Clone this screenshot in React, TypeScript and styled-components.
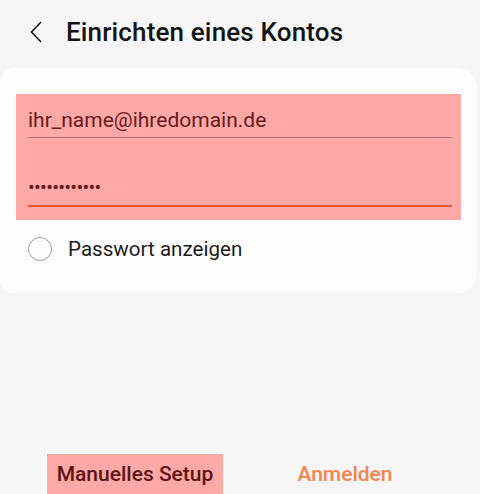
import React, { useState } from "react";
import styled, { createGlobalStyle } from "styled-components";

const GlobalStyle = createGlobalStyle`
  html, body {
    margin: 0;
    padding: 0;
    background: #f6f6f6;
  }
  * { box-sizing: border-box; }
`;

const Screen = styled.div`
  width: 480px;
  height: 494px;
  display: flex;
  flex-direction: column;
  background: #f6f6f6;
  font-family: Roboto, "Liberation Sans", sans-serif;
  overflow: hidden;
`;

const Header = styled.div`
  height: 68px;
  display: flex;
  align-items: center;
  padding: 0 0 5px 30px;
  gap: 24px;
`;

const BackButton = styled.button`
  border: 0;
  background: none;
  padding: 0;
  width: 12px;
  height: 22px;
  display: flex;
  cursor: pointer;
`;

const Title = styled.h1`
  margin: 0;
  font-size: 26px;
  font-weight: 500;
  color: #141414;
  letter-spacing: 0.15px;
`;

const Card = styled.div`
  height: 225px;
  margin-right: 3px;
  background: #fdfdfd;
  border-radius: 14px 20px 20px 14px;
  padding-top: 26px;
`;

const Highlight = styled.div`
  margin: 0 16px;
  padding: 0 9px 13px 12px;
  background: #ffa9a7;
`;

const Field = styled.div<{ $focused?: boolean; $top: number }>`
  padding-top: ${(p) => p.$top}px;
  padding-bottom: ${(p) => (p.$focused ? 6 : 5)}px;
  border-bottom: ${(p) => (p.$focused ? "2px solid #ea5230" : "1px solid #b07272")};
`;

const FieldText = styled.div<{ $secret?: boolean }>`
  font-size: ${(p) => (p.$secret ? 20 : 21)}px;
  line-height: 24px;
  color: #6a1818;
  letter-spacing: ${(p) => (p.$secret ? "-0.7px" : "0")};
`;

const CheckRow = styled.label`
  height: 58px;
  display: flex;
  align-items: center;
  gap: 16px;
  padding-left: 28px;
  cursor: pointer;
`;

const Radio = styled.span<{ $on: boolean }>`
  width: 24px;
  height: 24px;
  border-radius: 50%;
  border: 1.5px solid ${(p) => (p.$on ? "#f5834b" : "#9a9a9a")};
  background: ${(p) => (p.$on ? "#f5834b" : "transparent")};
`;

const CheckLabel = styled.span`
  font-size: 20.6px;
  color: #1c1c1c;
`;

const Spacer = styled.div`
  flex: 1;
`;

const Footer = styled.div`
  display: flex;
  padding: 0 30px;
  height: 40px;
`;

const FooterCell = styled.div`
  flex: 1;
  display: flex;
  justify-content: center;
`;

const FooterButton = styled.button<{ $primary?: boolean }>`
  border: 0;
  height: 40px;
  padding: 0 10px;
  font-family: Roboto, "Liberation Sans", sans-serif;
  font-size: 21px;
  font-weight: 500;
  line-height: 40px;
  background: ${(p) => (p.$primary ? "transparent" : "#ffa9a7")};
  color: ${(p) => (p.$primary ? "#f5834b" : "#5e1414")};
  cursor: pointer;
`;

export default function App() {
  const [showPw, setShowPw] = useState(false);
  return (
    <Screen>
      <GlobalStyle />
      <Header>
        <BackButton aria-label="Zurück">
          <svg width="12" height="22" viewBox="0 0 12 22">
            <path d="M11 1 L1.5 11 L11 21" fill="none" stroke="#1a1a1a" strokeWidth="1.6" />
          </svg>
        </BackButton>
        <Title>Einrichten eines Kontos</Title>
      </Header>
      <Card>
        <Highlight>
          <Field $top={14}>
            <FieldText>ihr_name@ihredomain.de</FieldText>
          </Field>
          <Field $top={37} $focused>
            <FieldText $secret>{showPw ? "passwort123" : "••••••••••••"}</FieldText>
          </Field>
        </Highlight>
        <CheckRow onClick={() => setShowPw(!showPw)}>
          <Radio $on={showPw} />
          <CheckLabel>Passwort anzeigen</CheckLabel>
        </CheckRow>
      </Card>
      <Spacer />
      <Footer>
        <FooterCell>
          <FooterButton>Manuelles Setup</FooterButton>
        </FooterCell>
        <FooterCell>
          <FooterButton $primary>Anmelden</FooterButton>
        </FooterCell>
      </Footer>
    </Screen>
  );
}
